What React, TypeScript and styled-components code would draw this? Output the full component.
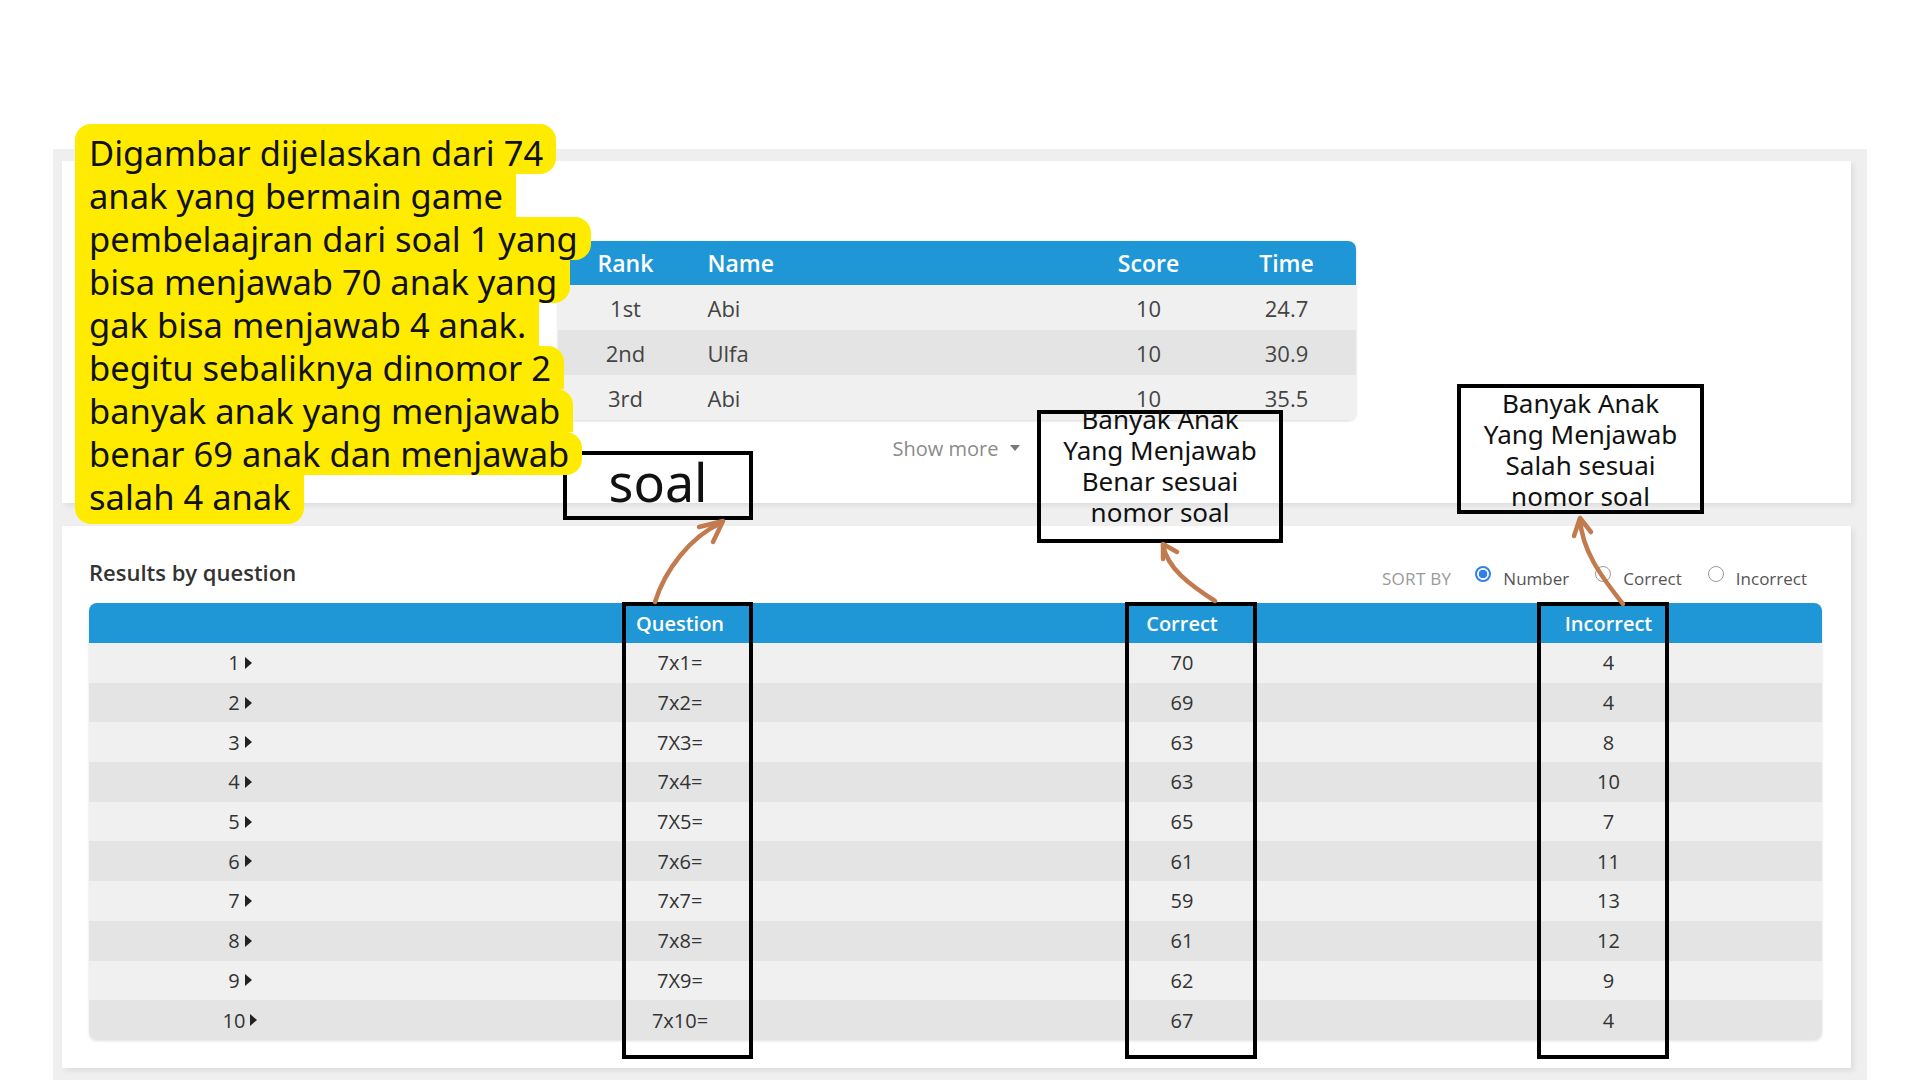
import { useLayoutEffect, useRef, useState } from 'react'
import styled, { createGlobalStyle } from 'styled-components'

// Global
const GlobalStyle = createGlobalStyle`
    html, body {
        margin: 0;
        padding: 0;
        overflow: hidden;
        background: #fff;
    }
    body {
        font-family: 'Open Sans', 'Noto Sans', sans-serif;
    }
    * {
        box-sizing: border-box;
    }
`

const Page = styled.div`
    height: 1080px;
    overflow: hidden;
    padding-top: 149px;
    position: relative;
    width: 1920px;
`

const Shell = styled.div`
    background: #efefef;
    display: flex;
    flex-direction: column;
    gap: 23px;
    margin-left: 53px;
    min-height: 940px;
    padding: 12px 16px 0 9px;
    width: 1814px;
`

const Panel = styled.section<{ $height: number }>`
    background: #fff;
    box-shadow: 3px 3px 5px rgba(0, 0, 0, 0.07);
    height: ${(p) => p.$height}px;
`

const TopPanel = styled(Panel)`
    padding-top: 80px;
`

const ResultsPanel = styled(Panel)`
    padding: 30px 29px 27px 27px;
`

const PeekImage = styled.div`
    background: linear-gradient(90deg, #e6a56e 0%, #3b2a21 20%, #e3b07e 35%, #d9895b 60%, #efb38c 100%);
    height: 30px;
    margin-left: 560px;
    width: 222px;
`

// Leaderboard
const Board = styled.div`
    border-radius: 8px;
    box-shadow: 0 1px 3px rgba(0, 0, 0, 0.16);
    margin: 0 auto;
    overflow: hidden;
    width: 798px;
`

const BoardRow = styled.div<{ $head?: boolean; $alt?: boolean }>`
    align-items: center;
    background: ${(p) => (p.$head ? '#1f96d5' : p.$alt ? '#e4e4e4' : '#f0f0f0')};
    color: ${(p) => (p.$head ? '#fff' : '#444')};
    display: grid;
    font-size: ${(p) => (p.$head ? 23 : 22)}px;
    font-weight: ${(p) => (p.$head ? 600 : 400)};
    grid-template-columns: 136px 1fr 138px 138px;
    height: ${(p) => (p.$head ? 44 : 45)}px;
`

const BoardCell = styled.div<{ $left?: boolean }>`
    padding-left: ${(p) => (p.$left ? '14px' : '0')};
    text-align: ${(p) => (p.$left ? 'left' : 'center')};
`

const ShowMore = styled.div`
    align-items: center;
    color: #8b8b8b;
    display: flex;
    font-size: 20px;
    gap: 12px;
    height: 24px;
    justify-content: center;
    margin-top: 16px;
`

const Caret = styled.span`
    border-left: 5px solid transparent;
    border-right: 5px solid transparent;
    border-top: 6px solid #777;
    height: 0;
    width: 0;
`

// Results by question
const Toolbar = styled.div`
    align-items: center;
    display: flex;
    height: 44px;
    justify-content: space-between;
    margin-bottom: 3px;
`

const Title = styled.h2`
    color: #333;
    font-size: 22px;
    font-weight: 600;
    margin: 0;
    padding: 0 0 12px 0;
`

const SortGroup = styled.div`
    align-items: center;
    display: flex;
    padding-right: 15px;
`

const SortLabel = styled.span`
    color: #9a9a9a;
    font-size: 17px;
    letter-spacing: 0.3px;
    margin-right: 24px;
`

const RadioOption = styled.label`
    align-items: center;
    color: #555;
    display: flex;
    font-size: 17px;
    gap: 12px;
    margin-right: 26px;

    &:last-child {
        margin-right: 0;
    }
`

const RadioDot = styled.span<{ $checked?: boolean }>`
    background: ${(p) => (p.$checked ? 'radial-gradient(circle, #2f80ed 0 4px, #fff 4.6px)' : '#fff')};
    border: ${(p) => (p.$checked ? '2px solid #2f80ed' : '1.5px solid #9a9a9a')};
    border-radius: 50%;
    height: 16px;
    margin-top: -8px;
    width: 16px;
`

const ResultsTable = styled.div`
    border-radius: 8px;
    box-shadow: 0 1px 3px rgba(0, 0, 0, 0.12);
    overflow: hidden;
`

const ResultRow = styled.div<{ $head?: boolean; $alt?: boolean }>`
    align-items: center;
    background: ${(p) => (p.$head ? '#1f96d5' : p.$alt ? '#e4e4e4' : '#f0f0f0')};
    color: ${(p) => (p.$head ? '#fff' : '#333')};
    display: grid;
    font-size: 20px;
    font-weight: ${(p) => (p.$head ? 600 : 400)};
    grid-template-columns: 302px 578px 426px 1fr;
    height: ${(p) => (p.$head ? '40px' : '39.7px')};
    text-align: center;
`

const NumCell = styled.div`
    align-items: center;
    display: flex;
    gap: 5px;
    justify-content: center;
`

const Expand = styled.span`
    border-bottom: 6px solid transparent;
    border-left: 7px solid #222;
    border-top: 6px solid transparent;
    height: 0;
    width: 0;
`

// Annotations (laid over the screenshot)
const Note = styled.div`
    color: #111;
    display: flex;
    flex-direction: column;
    font-family: 'Noto Sans', Lato, sans-serif;
    font-size: 34.5px;
    left: 75px;
    position: absolute;
    top: 124px;
    z-index: 5;
`

const NoteLine = styled.div<{ $first?: boolean; $last?: boolean; $tr?: boolean; $br?: boolean }>`
    background: #ffeb00;
    border-radius: ${(p) =>
        `${p.$first ? 16 : 0}px ${p.$tr ? 16 : 0}px ${p.$br ? 16 : 0}px ${p.$last ? 16 : 0}px`};
    line-height: 43px;
    padding: ${(p) => (p.$first ? 7 : 0)}px 13px ${(p) => (p.$last ? 6 : 0)}px 14px;
    white-space: nowrap;
    width: fit-content;
`

const Callout = styled.div<{ $x: number; $y: number; $w: number; $h: number }>`
    border: 4px solid #000;
    height: ${(p) => p.$h}px;
    left: ${(p) => p.$x}px;
    position: absolute;
    top: ${(p) => p.$y}px;
    width: ${(p) => p.$w}px;
    z-index: 3;
`

const CalloutText = styled.div<{ $size: number; $lh: number; $shift: number }>`
    color: #111;
    font-family: 'Noto Sans', Lato, sans-serif;
    font-size: ${(p) => p.$size}px;
    line-height: ${(p) => p.$lh}px;
    margin-top: ${(p) => p.$shift}px;
    text-align: center;
    white-space: nowrap;
`

const Arrows = styled.svg`
    left: 0;
    pointer-events: none;
    position: absolute;
    top: 0;
    z-index: 6;
`

const noteLines = [
    'Digambar dijelaskan dari 74',
    'anak yang bermain game',
    'pembelaajran dari soal 1 yang',
    'bisa menjawab 70 anak yang',
    'gak bisa menjawab 4 anak.',
    'begitu sebaliknya dinomor 2',
    'banyak anak yang menjawab',
    'benar 69 anak dan menjawab',
    'salah 4 anak',
]

const leaders = [
    { rank: '1st', name: 'Abi', score: 10, time: '24.7' },
    { rank: '2nd', name: 'Ulfa', score: 10, time: '30.9' },
    { rank: '3rd', name: 'Abi', score: 10, time: '35.5' },
]

const results = [
    ['7x1=', 70, 4],
    ['7x2=', 69, 4],
    ['7X3=', 63, 8],
    ['7x4=', 63, 10],
    ['7X5=', 65, 7],
    ['7x6=', 61, 11],
    ['7x7=', 59, 13],
    ['7x8=', 61, 12],
    ['7X9=', 62, 9],
    ['7x10=', 67, 4],
] as const

function YellowNote() {
    const refs = useRef<(HTMLDivElement | null)[]>([])
    const [widths, setWidths] = useState<number[]>([])

    useLayoutEffect(() => {
        setWidths(refs.current.map((el) => (el ? el.offsetWidth : 0)))
    }, [])

    const last = noteLines.length - 1

    return (
        <Note>
            {noteLines.map((line, i) => {
                const w = widths[i] ?? 0
                const tr = i === 0 || w > (widths[i - 1] ?? 0) + 1
                const br = i === last || w > (widths[i + 1] ?? 0) + 1
                return (
                    <NoteLine
                        key={i}
                        ref={(el) => {
                            refs.current[i] = el
                        }}
                        $first={i === 0}
                        $last={i === last}
                        $tr={tr}
                        $br={br}
                    >
                        {line}
                    </NoteLine>
                )
            })}
        </Note>
    )
}

function App() {
    return (
        <Page>
            <GlobalStyle />
            <Shell>
                <TopPanel $height={342}>
                    <Board>
                        <BoardRow $head>
                            <BoardCell>Rank</BoardCell>
                            <BoardCell $left>Name</BoardCell>
                            <BoardCell>Score</BoardCell>
                            <BoardCell>Time</BoardCell>
                        </BoardRow>
                        {leaders.map((l, i) => (
                            <BoardRow key={l.rank} $alt={i % 2 === 1}>
                                <BoardCell>{l.rank}</BoardCell>
                                <BoardCell $left>{l.name}</BoardCell>
                                <BoardCell>{l.score}</BoardCell>
                                <BoardCell>{l.time}</BoardCell>
                            </BoardRow>
                        ))}
                    </Board>
                    <ShowMore>
                        Show more <Caret />
                    </ShowMore>
                </TopPanel>

                <ResultsPanel $height={542}>
                    <Toolbar>
                        <Title>Results by question</Title>
                        <SortGroup>
                            <SortLabel>SORT BY</SortLabel>
                            <RadioOption>
                                <RadioDot $checked />
                                Number
                            </RadioOption>
                            <RadioOption>
                                <RadioDot />
                                Correct
                            </RadioOption>
                            <RadioOption>
                                <RadioDot />
                                Incorrect
                            </RadioOption>
                        </SortGroup>
                    </Toolbar>
                    <ResultsTable>
                        <ResultRow $head>
                            <div />
                            <div>Question</div>
                            <div>Correct</div>
                            <div>Incorrect</div>
                        </ResultRow>
                        {results.map(([q, c, x], i) => (
                            <ResultRow key={i} $alt={i % 2 === 1}>
                                <NumCell>
                                    {i + 1}
                                    <Expand />
                                </NumCell>
                                <div>{q}</div>
                                <div>{c}</div>
                                <div>{x}</div>
                            </ResultRow>
                        ))}
                    </ResultsTable>
                </ResultsPanel>

                <PeekImage />
            </Shell>

            <YellowNote />

            <Callout $x={563} $y={451} $w={190} $h={69}>
                <CalloutText $size={52} $lh={60} $shift={-3}>
                    soal
                </CalloutText>
            </Callout>
            <Callout $x={1037} $y={410} $w={246} $h={133}>
                <CalloutText $size={26} $lh={31} $shift={-10}>
                    Banyak Anak
                    <br />
                    Yang Menjawab
                    <br />
                    Benar sesuai
                    <br />
                    nomor soal
                </CalloutText>
            </Callout>
            <Callout $x={1457} $y={384} $w={247} $h={130}>
                <CalloutText $size={26} $lh={31} $shift={0}>
                    Banyak Anak
                    <br />
                    Yang Menjawab
                    <br />
                    Salah sesuai
                    <br />
                    nomor soal
                </CalloutText>
            </Callout>

            <Callout $x={622} $y={602} $w={131} $h={457} />
            <Callout $x={1125} $y={602} $w={132} $h={457} />
            <Callout $x={1537} $y={602} $w={132} $h={457} />

            <Arrows width="1920" height="1080" viewBox="0 0 1920 1080">
                <g fill="none" stroke="#c27b4f" strokeWidth="4.5" strokeLinecap="round" strokeLinejoin="round">
                    <path d="M655 602 C665 570 690 537 721 523" />
                    <path d="M699 527 L723 521 L713 542" />
                    <path d="M1215 601 C1190 585 1167 568 1163 545" />
                    <path d="M1163 559 L1163 544 L1177 552" />
                    <path d="M1623 604 C1600 575 1582 550 1580 519" />
                    <path d="M1574 536 L1580 518 L1591 532" />
                </g>
            </Arrows>
        </Page>
    )
}

export default App
